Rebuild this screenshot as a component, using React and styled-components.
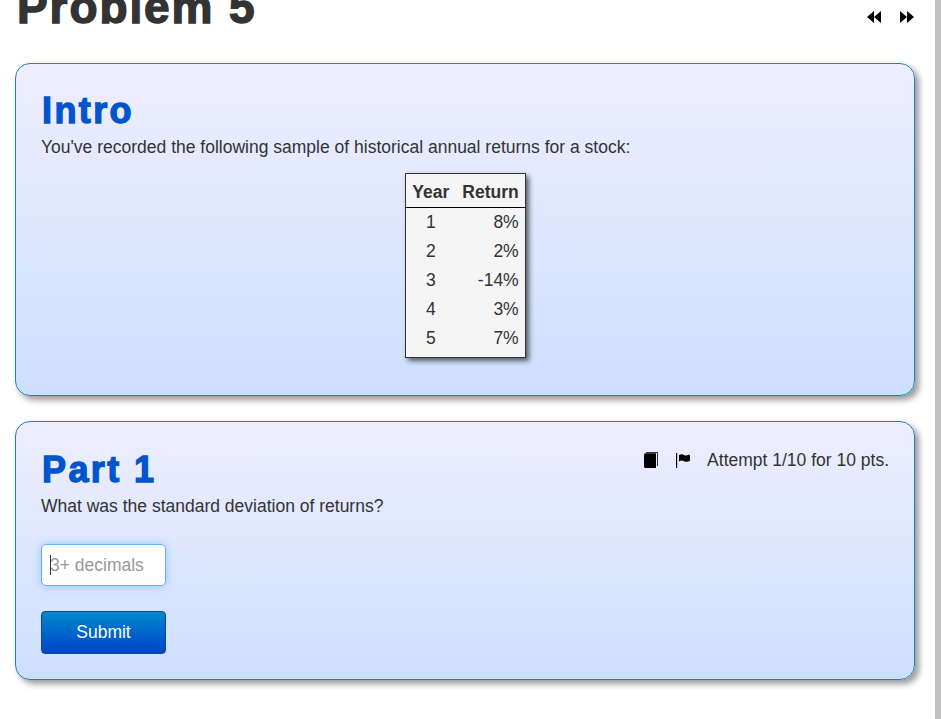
import React from "react";
import styled, { createGlobalStyle } from "styled-components";

const Global = createGlobalStyle`
  html, body {
    margin: 0;
    height: 100%;
    overflow: hidden;
    background: #fff;
  }
`;

const rows = [
  [1, "8%"],
  [2, "2%"],
  [3, "-14%"],
  [4, "3%"],
  [5, "7%"],
];

function BackIcon() {
  return (
    <svg width="14" height="12" viewBox="0 0 14 12">
      <path d="M0 6 7 0v12zM7 6l7-6v12z" fill="#000" />
    </svg>
  );
}

function ForwardIcon() {
  return (
    <svg width="14" height="12" viewBox="0 0 14 12">
      <path d="M0 0l7 6-7 6zM7 0l7 6-7 6z" fill="#000" />
    </svg>
  );
}

function BookIcon() {
  return (
    <svg width="14" height="16" viewBox="0 0 14 16">
      <path d="M2 0h12v14h-1V1H2z" fill="#333" />
      <path d="M0 2.500C0 1.500 1 1.200 2 1.200h10V16H2c-1 0-2-.4-2-1.600z" fill="#000" />
    </svg>
  );
}

function FlagIcon() {
  return (
    <svg width="14" height="15" viewBox="0 0 14 15">
      <path d="M0 0h1.200v15H0z" fill="#000" />
      <path d="M3 2c2-1.200 3.500-.8 5 0s3 .6 4.500-.2c.8-.3 1.500 0 1.500.6v5.400c-2 1.300-4 1.400-6 .4-2-.9-3-.8-5 .2z" fill="#000" />
    </svg>
  );
}

export default function App() {
  return (
    <Page>
      <Global />
      <Content>
        <TitleBar>
          <Title>Problem 5</Title>
          <Pager>
            <BackIcon />
            <ForwardIcon />
          </Pager>
        </TitleBar>

        <Panel>
          <IntroHeading>Intro</IntroHeading>
          <Text>You've recorded the following sample of historical annual returns for a stock:</Text>
          <TableWrap>
            <Table>
              <thead>
                <tr>
                  <Th $center>Year</Th>
                  <Th>Return</Th>
                </tr>
              </thead>
              <tbody>
                {rows.map(([year, ret]) => (
                  <tr key={year}>
                    <Td $center>{year}</Td>
                    <Td>{ret}</Td>
                  </tr>
                ))}
              </tbody>
            </Table>
          </TableWrap>
        </Panel>

        <Panel>
          <PartHeader>
            <PartHeading>Part 1</PartHeading>
            <Attempt>
              <BookIcon />
              <FlagIcon />
              <AttemptText>Attempt 1/10 for 10 pts.</AttemptText>
            </Attempt>
          </PartHeader>
          <Text>What was the standard deviation of returns?</Text>
          <InputWrap>
            <Input placeholder="3+ decimals" readOnly />
            <Caret />
          </InputWrap>
          <Submit type="button">Submit</Submit>
        </Panel>
      </Content>
      <ScrollTrack />
    </Page>
  );
}

/* ---------------- styles ---------------- */

const Page = styled.div`
  display: flex;
  height: 100vh;
  font-family: "Liberation Sans", Arial, sans-serif;
  color: #333;
  overflow: hidden;
`;

const Content = styled.div`
  flex: 1;
  min-width: 0;
  padding: 0 20px 0 15px;
`;

const ScrollTrack = styled.div`
  width: 6px;
  background: #c1c1c1;
`;

const TitleBar = styled.div`
  display: flex;
  justify-content: space-between;
  align-items: flex-start;
  height: 63px;
`;

const Title = styled.h1`
  margin: -18px 0 0 2px;
  font-size: 46px;
  line-height: 50px;
  font-weight: 700;
  letter-spacing: 1.9px;
  -webkit-text-stroke: 1.4px #333;
  color: #333;
`;

const Pager = styled.div`
  display: flex;
  gap: 19px;
  padding: 11px 1px 0 0;
`;

const Panel = styled.section`
  box-sizing: border-box;
  padding: 25px;
  margin-bottom: 25px;
  border: 1px solid #1a80c4;
  border-radius: 15px;
  background: linear-gradient(to bottom, #eeeeff, #cddffd);
  box-shadow: 4px 4px 6px rgba(0, 0, 0, 0.4);
`;

const Heading = styled.h2`
  margin: 0 0 0 1px;
  font-size: 36px;
  line-height: 44px;
  font-weight: 700;
  letter-spacing: 2.4px;
  -webkit-text-stroke: 1.3px #0055cc;
  color: #0055cc;
`;

const IntroHeading = styled(Heading)`
  margin-bottom: 1px;
`;

const PartHeading = styled(Heading)`
  margin-top: 1px;
  margin-bottom: 1px;
`;

const Text = styled.p`
  margin: 0;
  font-size: 17.5px;
  line-height: 26px;
`;

const TableWrap = styled.div`
  display: flex;
  justify-content: center;
  margin-top: 13px;
  padding: 0 0 12px 1px;
`;

const Table = styled.table`
  border-collapse: collapse;
  background: #f5f5f5;
  border: 1px solid #333;
  box-shadow: 3px 3px 5px rgba(0, 0, 0, 0.6);
  font-size: 17.5px;

  tbody tr:last-child td {
    padding-bottom: 4px;
  }
`;

const Th = styled.th`
  height: 29px;
  padding: 4px ${(p) => (p.$center ? "7px" : "6px")} 0 6px;
  font-weight: 700;
  text-align: ${(p) => (p.$center ? "center" : "right")};
  border-bottom: 1px solid #000;
`;

const Td = styled.td`
  height: 29px;
  padding: 0 ${(p) => (p.$center ? "7px" : "6px")} 0 6px;
  text-align: ${(p) => (p.$center ? "center" : "right")};
`;

const PartHeader = styled.div`
  display: flex;
  justify-content: space-between;
  align-items: flex-start;
`;

const Attempt = styled.div`
  display: flex;
  align-items: center;
  gap: 18px;
  height: 26px;
`;

const AttemptText = styled.span`
  font-size: 17.5px;
  margin-left: -1px;
`;

const InputWrap = styled.div`
  position: relative;
  width: 125px;
  margin-top: 25px;
`;

const Input = styled.input`
  box-sizing: border-box;
  display: block;
  width: 125px;
  height: 42px;
  padding: 0 8px;
  border: 1px solid #66afe9;
  border-radius: 5px;
  background: #fff;
  font-family: inherit;
  font-size: 17.5px;
  outline: none;
  box-shadow: 0 0 8px rgba(82, 168, 236, 0.5);

  &::placeholder {
    color: #999;
    opacity: 1;
  }
`;

const Caret = styled.span`
  position: absolute;
  left: 9px;
  top: 11px;
  width: 1px;
  height: 20px;
  background: #333;
`;

const Submit = styled.button`
  display: block;
  width: 125px;
  height: 43px;
  margin-top: 25px;
  border: 1px solid #0a4a94;
  border-radius: 4px;
  background: linear-gradient(to bottom, #0088cc, #0044cc);
  color: #fff;
  font-family: inherit;
  font-size: 17.5px;
`;
